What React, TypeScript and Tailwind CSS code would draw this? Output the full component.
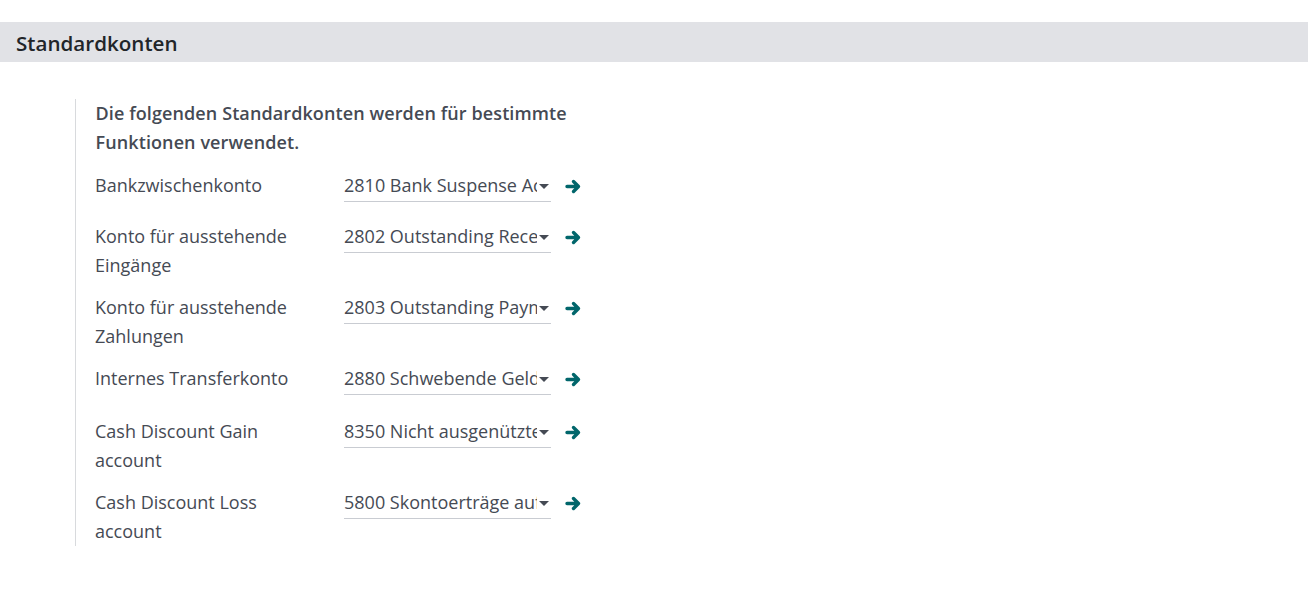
import React from "react";

const rows: { label: string; value: string; h: string }[] = [
  { label: "Bankzwischenkonto", value: "2810 Bank Suspense Account", h: "min-h-[38px]" },
  { label: "Konto für ausstehende Eingänge", value: "2802 Outstanding Receipts", h: "" },
  { label: "Konto für ausstehende Zahlungen", value: "2803 Outstanding Payments", h: "" },
  { label: "Internes Transferkonto", value: "2880 Schwebende Geldbewegungen", h: "min-h-[40px]" },
  { label: "Cash Discount Gain account", value: "8350 Nicht ausgenützte Lieferantenskonti", h: "" },
  { label: "Cash Discount Loss account", value: "5800 Skontoerträge auf Lieferungen", h: "" },
];

function Arrow() {
  return (
    <svg width="17" height="17" viewBox="0 0 17 17">
      <path
        d="M2 8.5 H13 M8.5 3.5 L13.5 8.5 L8.5 13.5"
        fill="none"
        stroke="#01666b"
        strokeWidth="3.4"
        strokeLinecap="round"
        strokeLinejoin="round"
      />
    </svg>
  );
}

export default function App() {
  return (
    <div
      className="w-[1308px] h-[589px] bg-white text-[#454a54]"
      style={{ fontFamily: '"Open Sans", "Noto Sans", sans-serif' }}
    >
      <div className="h-[22px]" />
      <div className="h-[40px] bg-[#e1e2e6] flex items-center pl-[16px]">
        <h2 className="text-[20.6px] font-semibold text-[#212529] leading-none pt-[2px]">Standardkonten</h2>
      </div>
      <div className="pt-[37px] pl-[75px]">
        <div className="border-l border-[#d8dadd] pl-[19px] w-[520px] text-[18px] leading-[29px]">
          <div className="font-semibold w-[480px] pl-[0.5px] tracking-[0.1px]">
            Die folgenden Standardkonten werden für bestimmte Funktionen verwendet.
          </div>
          <div className="mt-[14px] flex flex-col gap-[13px]">
            {rows.map((r) => (
              <div key={r.label} className={`flex ${r.h}`}>
                <div className="w-[249px] pr-[30px]">{r.label}</div>
                <div className="flex items-start">
                  <div className="w-[207px] h-[31px] border-b border-[#c9ccd2] flex items-start">
                    <div className="flex-1 overflow-hidden whitespace-nowrap">{r.value}</div>
                    <div className="w-[14px] h-[31px] flex items-center justify-center">
                      <div className="w-0 h-0 border-l-[5px] border-r-[5px] border-t-[5px] border-l-transparent border-r-transparent border-t-[#454a54]" />
                    </div>
                  </div>
                  <div className="ml-[14px] h-[31px] flex items-center">
                    <Arrow />
                  </div>
                </div>
              </div>
            ))}
          </div>
        </div>
      </div>
    </div>
  );
}
